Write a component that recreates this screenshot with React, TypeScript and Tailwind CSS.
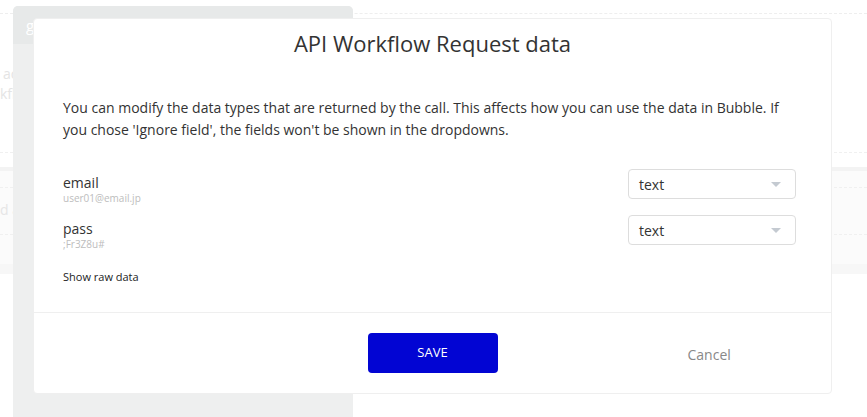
import React from 'react';

const fields = [
  { name: 'email', sample: 'user01@email.jp', type: 'text' },
  { name: 'pass', sample: ';Fr3Z8u#', type: 'text' },
];

function TypeSelect({ value }: { value: string }) {
  return (
    <div className="flex h-[30px] w-[168px] items-center justify-between rounded-[4px] border border-[#dddddd] bg-white pl-[10px] pr-[14px] text-[14px] text-[#333333]">
      <span>{value}</span>
      <svg width="10" height="6" viewBox="0 0 10 6" className="mt-[2px]">
        <path d="M0 0 L10 0 L5 5 Z" fill="#c4cad1" />
      </svg>
    </div>
  );
}

function Backdrop() {
  return (
    <div className="flex h-full flex-col">
      <div className="mt-[13px] h-0 border-t border-dashed border-[#eeeeee]" />
      <div className="mt-[50px] pl-[3px] text-[14px] leading-[20px] text-[#e4e4e4]">ac</div>
      <div className="text-[14px] leading-[20px] text-[#e4e4e4]">kfl</div>
      <div className="mt-[48px] h-0 border-t border-dashed border-[#f0f0f0]" />
      <div className="mt-[14px] flex h-[97px] flex-col border-t-[4px] border-[#f3f3f3] bg-[#fbfbfb]">
        <div className="mt-[16px] h-0 border-t border-dashed border-[#f0f0f0]" />
        <div className="mt-[12px] text-[14px] leading-[20px] text-[#e6e6e6]">d a</div>
        <div className="mt-[14px] h-0 border-t border-dashed border-[#f0f0f0]" />
      </div>
      <div className="h-[10px] bg-[#f7f7f7]" />
    </div>
  );
}

export default function App() {
  return (
    <div
      className="relative h-[417px] w-[867px] overflow-hidden bg-white"
      style={{ fontFamily: "'Open Sans', 'Liberation Sans', sans-serif" }}
    >
      <Backdrop />

      {/* side panel behind the modal */}
      <div className="absolute left-[13px] top-[6px] flex h-[424px] w-[340px] flex-col rounded-t-[5px] bg-[#eeefef]">
        <div className="flex h-[38px] items-center rounded-t-[5px] bg-[#e7e9e9] pl-[13px] text-[15px] text-white">g</div>
        <div className="flex-1" />
        <div className="pl-[20px] text-[13px] leading-[16px] text-[#dcdcdc]">Response 200 (formal) text</div>
      </div>

      {/* modal */}
      <div className="absolute left-[33px] top-[18px] flex w-[799px] flex-col rounded-[4px] border border-[#efefef] bg-white">
        <h2 className="pt-[9px] text-center text-[22px] leading-[30px] text-[#333333]">API Workflow Request data</h2>

        <p className="mt-[39px] pl-[29px] pr-[40px] text-[14px] leading-[22px] text-[#333333]">
          You can modify the data types that are returned by the call. This affects how you can use the data in Bubble. If you chose 'Ignore field', the fields won't be shown in the dropdowns.
        </p>

        <div className="mt-[28px] flex flex-col gap-[16px] pl-[29px] pr-[35px]">
          {fields.map((f) => (
            <div key={f.name} className="flex h-[30px] items-start justify-between">
              <div className="flex flex-col pt-[5px]">
                <span className="text-[14px] leading-[18px] text-[#333333]">{f.name}</span>
                <span className="text-[10px] leading-[12px] text-[#bdbdbd]">{f.sample}</span>
              </div>
              <TypeSelect value={f.type} />
            </div>
          ))}
        </div>

        <div className="mt-[25px] pl-[29px] text-[11px] leading-[14px] text-[#222222]">Show raw data</div>

        <div className="mt-[28px] border-t border-[#efefef]" />

        <div className="grid h-[80px] grid-cols-[1fr_130px_1fr] items-center">
          <div />
          <button className="h-[40px] rounded-[4px] bg-[#0205d3] text-[13px] text-white">SAVE</button>
          <div className="pl-[190px] pt-[3px] text-[14px] text-[#888888]">Cancel</div>
        </div>
      </div>
    </div>
  );
}
